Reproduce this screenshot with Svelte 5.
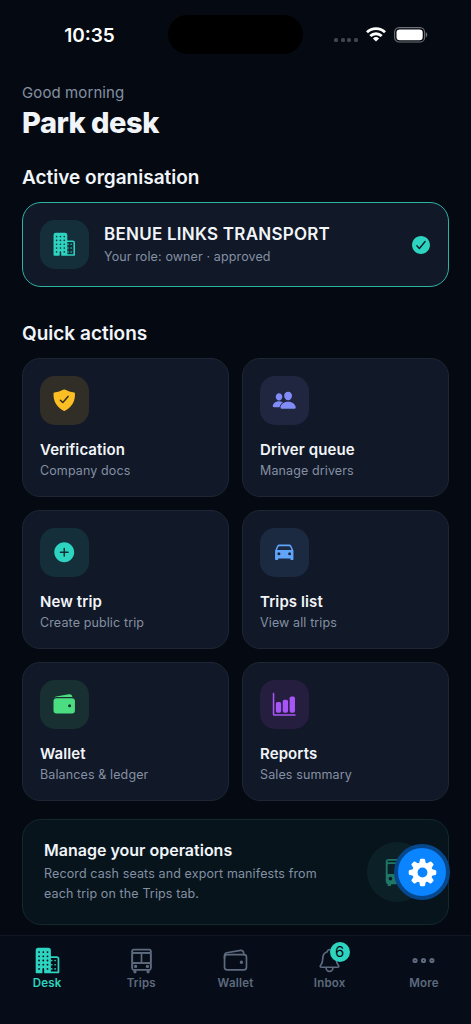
<script>
  const actions = [
    { icon: "shield", tone: "amber", title: "Verification", text: "Company docs" },
    { icon: "people", tone: "indigo", title: "Driver queue", text: "Manage drivers" },
    { icon: "add", tone: "teal", title: "New trip", text: "Create public trip" },
    { icon: "car", tone: "blue", title: "Trips list", text: "View all trips" },
    { icon: "wallet", tone: "green", title: "Wallet", text: "Balances & ledger" },
    { icon: "chart", tone: "purple", title: "Reports", text: "Sales summary" },
  ];

  const tabs = [
    { icon: "business", label: "Desk" },
    { icon: "busOutline", label: "Trips" },
    { icon: "walletOutline", label: "Wallet" },
    { icon: "bell", label: "Inbox", badge: 6 },
    { icon: "more", label: "More" },
  ];

  let active = $state("Desk");

  const windows = [96, 176, 256].flatMap((x) => [96, 176, 256, 336, 416].map((y) => [x, y]))
    .filter(([x, y]) => !(x === 176 && y === 416));
  const teeth = [0, 45, 90, 135, 180, 225, 270, 315];
</script>

{#snippet icon(name)}
  <svg class="icon" viewBox="0 0 512 512" fill="currentColor" aria-hidden="true">
    {#if name === "business"}
      <path fill-rule="evenodd" d="M80 16h192a48 48 0 0 1 48 48v112h112a48 48 0 0 1 48 48v256a16 16 0 0 1-16 16H200a8 8 0 0 1-8-8v-72a16 16 0 0 0-32 0v72a8 8 0 0 1-8 8H48a16 16 0 0 1-16-16V64a48 48 0 0 1 48-48zM320 208v256h128V224a16 16 0 0 0-16-16z" />
      {#each windows as [x, y]}
        <circle class="hole" cx={x} cy={y} r="17" />
      {/each}
      {#each [256, 336, 416] as y}
        <circle cx="336" cy={y} r="16" />
        <circle cx="400" cy={y} r="16" />
      {/each}
    {:else if name === "shield"}
      <path d="M479.07 111.36a16 16 0 00-13.15-14.74c-86.5-15.52-122.61-26.74-203.33-63.2a16 16 0 00-13.18 0C168.69 69.88 132.58 81.1 46.08 96.62a16 16 0 00-13.15 14.74c-3.85 61.11 4.36 118.05 24.43 169.24A349.47 349.47 0 00129 393.11c53.47 56.73 110.24 81.37 121.07 85.73a16 16 0 0012 0c10.83-4.36 67.6-29 121.07-85.73a349.47 349.47 0 0071.5-112.51c20.07-51.19 28.28-108.13 24.43-169.24zm-131 75.11l-110.8 128a16 16 0 01-11.41 5.53h-.66a16 16 0 01-11.2-4.57l-49.2-48.2a16 16 0 1122.4-22.86l37 36.29 99.7-115.13a16 16 0 0124.19 21z" />
    {:else if name === "people"}
      <path d="M336 256c-20.56 0-40.44-9.18-56-25.84-15.13-16.25-24.37-37.92-26-61-1.74-24.62 5.77-47.26 21.14-63.76S312 80 336 80c23.83 0 45.38 9.06 60.7 25.52 15.47 16.62 23 39.22 21.26 63.63-1.67 23.11-10.9 44.77-26 61C376.44 246.82 356.57 256 336 256zm131.83 176H204.18a27.71 27.71 0 01-22-10.67 30.22 30.22 0 01-5.26-25.79c8.42-33.81 29.28-61.85 60.32-81.08C264.79 297.4 299.86 288 336 288c36.85 0 71 9 98.71 26.05 31.11 19.13 52 47.33 60.38 81.55a30.27 30.27 0 01-5.32 25.78A27.68 27.68 0 01467.83 432zM147 260c-35.19 0-66.13-32.72-69-72.93-1.42-20.6 5-39.65 18-53.62 12.86-13.83 31-21.45 51-21.45s38 7.66 50.93 21.57c13.1 14.08 19.5 33.09 18 53.52-2.87 40.2-33.8 72.91-68.93 72.91zm65.66 31.45c-17.59-8.6-40.42-12.9-65.65-12.9-29.46 0-58.07 7.68-80.57 21.62C40.93 316 23.77 339.05 16.84 366.88a27.39 27.39 0 004.79 23.36A25.32 25.32 0 0041.72 400h111a8 8 0 007.87-6.57c.11-.63.25-1.26.41-1.88 8.48-34.06 28.35-62.84 57.71-83.82a8 8 0 00-.63-13.39c-1.57-.92-3.37-1.89-5.42-2.89z" />
    {:else if name === "add"}
      <path d="M256 48C141.31 48 48 141.31 48 256s93.31 208 208 208 208-93.31 208-208S370.69 48 256 48zm80 224h-64v64a16 16 0 01-32 0v-64h-64a16 16 0 010-32h64v-64a16 16 0 0132 0v64h64a16 16 0 010 32z" />
    {:else if name === "check"}
      <path d="M256 48C141.31 48 48 141.31 48 256s93.31 208 208 208 208-93.31 208-208S370.69 48 256 48zm108.25 138.29l-134.4 160a16 16 0 01-12 5.71h-.27a16 16 0 01-11.89-5.3l-57.6-64a16 16 0 1123.78-21.4l45.29 50.32 122.59-145.91a16 16 0 0124.5 20.58z" />
    {:else if name === "car"}
      <path d="M447.68 220.78a16 16 0 00-1-3.08l-37.78-88.16C400.19 109.17 379 96 354.89 96H157.11c-24.09 0-45.3 13.17-54 33.54L65.29 217.7A15.72 15.72 0 0064 224v176a16 16 0 0016 16h32a16 16 0 0016-16v-16h256v16a16 16 0 0016 16h32a16 16 0 0016-16V224a16.15 16.15 0 00-.32-3.22zM144 320a32 32 0 1132-32 32 32 0 01-32 32zm224 0a32 32 0 1132-32 32 32 0 01-32 32zM104.26 208l28.23-65.85C136.11 133.69 146 128 157.11 128h197.78c11.1 0 21 5.69 24.62 14.15L407.74 208z" />
    {:else if name === "wallet"}
      <path d="M95.5 104h320a87.73 87.73 0 0111.18.71 66 66 0 00-77.51-55.56L86 94.08h-.3a66 66 0 00-41.07 26.13A87.57 87.57 0 0195.5 104zM415.5 128h-320a64.07 64.07 0 00-64 64v192a64.07 64.07 0 0064 64h320a64.07 64.07 0 0064-64V192a64.07 64.07 0 00-64-64zM368 320a32 32 0 1132-32 32 32 0 01-32 32z" />
    {:else if name === "chart"}
      <path d="M480 496H48a32 32 0 01-32-32V32a16 16 0 0132 0v432h432a16 16 0 010 32z" />
      <rect x="80" y="208" width="112" height="224" rx="36" />
      <rect x="224" y="160" width="112" height="272" rx="36" />
      <rect x="368" y="96" width="112" height="336" rx="36" />
    {:else if name === "bus"}
      <path fill-rule="evenodd" d="M112 32h288a48 48 0 0 1 48 48v336a48 48 0 0 1-32 45v19a16 16 0 0 1-16 16h-24a16 16 0 0 1-16-16v-16H152v16a16 16 0 0 1-16 16h-24a16 16 0 0 1-16-16v-19a48 48 0 0 1-32-45V80a48 48 0 0 1 48-48zM96 64v24h320V64zM96 136v152h144V120H112a16 16 0 0 0-16 16zm176-16v168h144V136a16 16 0 0 0-16-16zM144 336a32 32 0 1 0 0 64 32 32 0 0 0 0-64zm224 0a32 32 0 1 0 0 64 32 32 0 0 0 0-64z" />
    {:else if name === "gear"}
      {#each teeth as angle}
        <path transform="rotate({angle} 256 256)" d="M202 130l14-72q3-16 19-16h42q16 0 19 16l14 72z" />
      {/each}
      <path fill-rule="evenodd" d="M256 96a160 160 0 1 0 0 320 160 160 0 0 0 0-320zm0 83a77 77 0 1 1 0 154 77 77 0 0 1 0-154z" />
    {:else}
      <g fill="none" stroke="currentColor" stroke-width="32" stroke-linecap="round" stroke-linejoin="round">
        {#if name === "busOutline"}
          <rect x="80" y="112" width="352" height="192" rx="24" />
          <rect x="80" y="304" width="352" height="128" rx="24" />
          <rect x="80" y="48" width="352" height="64" rx="28" />
          <path d="M256 112v192M80 80v304M432 80v304M120 448v32h24v-32M368 448v32h24v-32" />
          <circle cx="144" cy="368" r="16" />
          <circle cx="368" cy="368" r="16" />
        {:else if name === "walletOutline"}
          <rect x="48" y="144" width="416" height="288" rx="48" />
          <path d="M411.36 144v-30A50 50 0 00352 64.9L88.64 109.85A50 50 0 0048 159v49" />
          <circle cx="368" cy="288" r="16" />
        {:else if name === "bell"}
          <path d="M427.68 351.43C402 320 383.87 304 383.87 217.35 383.87 138 343.35 109.73 310 96c-4.43-1.82-8.6-6-9.95-10.55C294.2 65.54 277.8 48 256 48s-38.21 17.55-44 37.47c-1.35 4.6-5.52 8.71-9.95 10.53-33.39 13.75-73.87 41.92-73.87 121.35C128.13 304 110 320 84.32 351.43 73.68 364.45 83 384 101.61 384h308.88c18.51 0 27.77-19.61 17.19-32.57zM320 384v16a64 64 0 01-128 0v-16" />
        {:else if name === "more"}
          <g stroke-width="38">
            <circle cx="96" cy="256" r="30" />
            <circle cx="256" cy="256" r="30" />
            <circle cx="416" cy="256" r="30" />
          </g>
        {/if}
      </g>
    {/if}
  </svg>
{/snippet}

<div class="screen">
  <div class="status">
    <div class="time">10:35</div>
    <div class="island"></div>
    <div class="signals">
      <div class="dots"><i></i><i></i><i></i><i></i></div>
      <svg class="wifi" viewBox="0 0 20 15" fill="none" stroke="#fff" stroke-width="2.8">
        <path d="M1 5.3a13 13 0 0 1 18 0M4.3 9a8.3 8.3 0 0 1 11.4 0" />
        <path d="M10 14.6l-3.1-3.2a4.5 4.5 0 0 1 6.2 0z" fill="#fff" stroke="none" />
      </svg>
      <svg class="battery" viewBox="0 0 34 16">
        <rect x=".6" y=".6" width="30" height="14.4" rx="4.6" fill="none" stroke="#6d7076" stroke-width="1.1" />
        <rect x="2.5" y="2.4" width="26.2" height="10.8" rx="3.2" fill="#fff" />
        <path d="M31.8 5.3c2 .6 2 4.4 0 5z" fill="#6d7076" />
      </svg>
    </div>
  </div>

  <main>
    <div class="greeting">Good morning</div>
    <h1>Park desk</h1>

    <h2>Active organisation</h2>
    <div class="org">
      <div class="tile teal">{@render icon("business")}</div>
      <div class="org-info">
        <div class="org-name">BENUE LINKS TRANSPORT</div>
        <div class="org-role">Your role: owner · approved</div>
      </div>
      <div class="org-check">{@render icon("check")}</div>
    </div>

    <h2 class="quick">Quick actions</h2>
    <div class="grid">
      {#each actions as action}
        <div class="card">
          <div class="tile {action.tone}">{@render icon(action.icon)}</div>
          <div class="card-title">{action.title}</div>
          <div class="card-text">{action.text}</div>
        </div>
      {/each}
    </div>

    <div class="banner">
      <div class="banner-info">
        <div class="banner-title">Manage your operations</div>
        <div class="banner-text">Record cash seats and export manifests from each trip on the Trips tab.</div>
      </div>
      <div class="banner-icon">{@render icon("bus")}</div>
      <button class="fab" aria-label="Settings">{@render icon("gear")}</button>
    </div>
  </main>

  <nav>
    {#each tabs as tab}
      <button class="tab" class:active={active === tab.label} onclick={() => (active = tab.label)}>
        <span class="tab-icon">
          {@render icon(tab.icon)}
          {#if tab.badge}<span class="badge">{tab.badge}</span>{/if}
        </span>
        <span class="tab-label">{tab.label}</span>
      </button>
    {/each}
  </nav>
</div>

<style>
  :global(body) {
    background: #050a12;
  }

  .screen {
    display: flex;
    flex-direction: column;
    width: 100%;
    height: 1024px;
    overflow: hidden;
    background: #050a12;
    color: #f1f5f9;
    font-family: Inter, "Liberation Sans", sans-serif;
  }

  .icon {
    display: block;
    width: 100%;
    height: 100%;
  }

  .status {
    display: grid;
    grid-template-columns: 168px 135px 1fr;
    height: 66px;
    padding-top: 15px;
    box-sizing: border-box;
  }

  .time {
    padding-left: 11px;
    text-align: center;
    color: #fff;
    font-size: 19px;
    font-weight: 600;
    line-height: 41px;
  }

  .island {
    height: 39px;
    border-radius: 20px;
    background: #000;
  }

  .signals {
    display: flex;
    align-items: center;
    height: 39px;
    padding-left: 31px;
  }

  .dots {
    display: flex;
    gap: 2.5px;
    margin-top: 11px;
  }

  .dots i {
    width: 4px;
    height: 4px;
    border-radius: 1.5px;
    background: #41454d;
  }

  .wifi {
    width: 20px;
    height: 15px;
    margin-left: 8px;
  }

  .battery {
    width: 34px;
    height: 16px;
    margin-left: 8px;
  }

  main {
    flex: 1;
    padding: 15px 22px 0;
  }

  .greeting {
    color: #8490a3;
    font-size: 15px;
    line-height: 24px;
    letter-spacing: 0.1px;
  }

  h1 {
    margin: 0;
    font-size: 29px;
    font-weight: 800;
    line-height: 35px;
    letter-spacing: -0.5px;
  }

  h2 {
    margin: 24px 0 10px;
    font-size: 19px;
    font-weight: 600;
    line-height: 28px;
  }

  h2.quick {
    margin-top: 33px;
  }

  .org {
    display: flex;
    align-items: center;
    box-sizing: border-box;
    height: 85px;
    padding: 0 16px 0 16.5px;
    border: 1.5px solid #2db3a4;
    border-radius: 19px;
    background: #111827;
  }

  .tile {
    display: flex;
    align-items: center;
    justify-content: center;
    width: 49px;
    height: 49px;
    border-radius: 15px;
    background: var(--tile);
  }

  .tile .icon {
    width: 24.5px;
    height: 24.5px;
  }

  .teal { --tile: #152f3a; color: #2dd4bf; }
  .amber { --tile: #302e27; color: #fbbf24; }
  .indigo { --tile: #20263f; color: #818cf8; }
  .blue { --tile: #1c2a41; color: #60a5fa; }
  .green { --tile: #193033; color: #4ade80; }
  .purple { --tile: #251e3f; color: #a855f7; }

  .hole {
    fill: var(--tile);
  }

  .org-info {
    flex: 1;
    margin-left: 15.5px;
  }

  .org-name {
    font-size: 17px;
    font-weight: 600;
    line-height: 24px;
    letter-spacing: 0.25px;
  }

  .org-role {
    color: #8490a3;
    font-size: 12.5px;
    line-height: 22px;
    letter-spacing: 0.12px;
  }

  .org-check {
    width: 22px;
    height: 22px;
    color: #2dd4bf;
  }

  .grid {
    display: grid;
    grid-template-columns: 1fr 1fr;
    gap: 13px;
  }

  .card {
    box-sizing: border-box;
    height: 139px;
    padding: 17px;
    border: 1px solid #1e2634;
    border-radius: 18px;
    background: #111827;
  }

  .card-title {
    margin-top: 14px;
    font-size: 15px;
    font-weight: 600;
    line-height: 21px;
    letter-spacing: 0.1px;
  }

  .card-text {
    color: #8490a3;
    font-size: 12.5px;
    line-height: 21px;
    letter-spacing: 0.12px;
  }

  .banner {
    position: relative;
    display: flex;
    align-items: center;
    box-sizing: border-box;
    height: 106px;
    margin-top: 18px;
    padding: 0 21px;
    border: 1px solid #12292f;
    border-radius: 19px;
    background: #07141c;
  }

  .banner-info {
    flex: 1;
    padding-bottom: 3px;
  }

  .banner-title {
    font-size: 16px;
    font-weight: 600;
    line-height: 24px;
  }

  .banner-text {
    width: 285px;
    margin-top: 2px;
    color: #8490a3;
    font-size: 12.5px;
    line-height: 19.5px;
    letter-spacing: 0.12px;
  }

  .banner-icon {
    display: flex;
    flex: none;
    align-items: center;
    justify-content: center;
    width: 60px;
    height: 60px;
    border-radius: 50%;
    background: #0b2127;
    color: #1f7766;
  }

  .banner-icon .icon {
    width: 30px;
    height: 30px;
  }

  /* floating button hangs over the banner's right edge */
  .fab {
    position: absolute;
    top: 24px;
    right: -2px;
    display: flex;
    align-items: center;
    justify-content: center;
    box-sizing: border-box;
    width: 56px;
    height: 56px;
    padding: 0;
    border: 4px solid #07478b;
    border-radius: 50%;
    background: #0a84ff;
    color: #fff;
  }

  .fab .icon {
    width: 33px;
    height: 33px;
    flex: none;
  }

  nav {
    display: flex;
    box-sizing: border-box;
    height: 89px;
    border-top: 1px solid #0f1724;
    background: #070d18;
  }

  .tab {
    --tile: #070d18;
    display: flex;
    flex: 1;
    flex-direction: column;
    align-items: center;
    padding: 10.5px 0 0;
    border: 0;
    background: none;
    color: #5d6a7e;
    font: inherit;
  }

  .tab.active {
    color: #2dd4bf;
  }

  .tab-icon {
    position: relative;
    width: 27px;
    height: 27px;
  }

  .badge {
    position: absolute;
    top: -5px;
    left: 13.5px;
    width: 20px;
    height: 20px;
    border-radius: 50%;
    background: #2dd4bf;
    color: #050a12;
    font-size: 15px;
    line-height: 20px;
    text-align: center;
  }

  .tab-label {
    font-size: 11.5px;
    font-weight: 600;
    line-height: 19px;
    letter-spacing: 0.2px;
  }
</style>
